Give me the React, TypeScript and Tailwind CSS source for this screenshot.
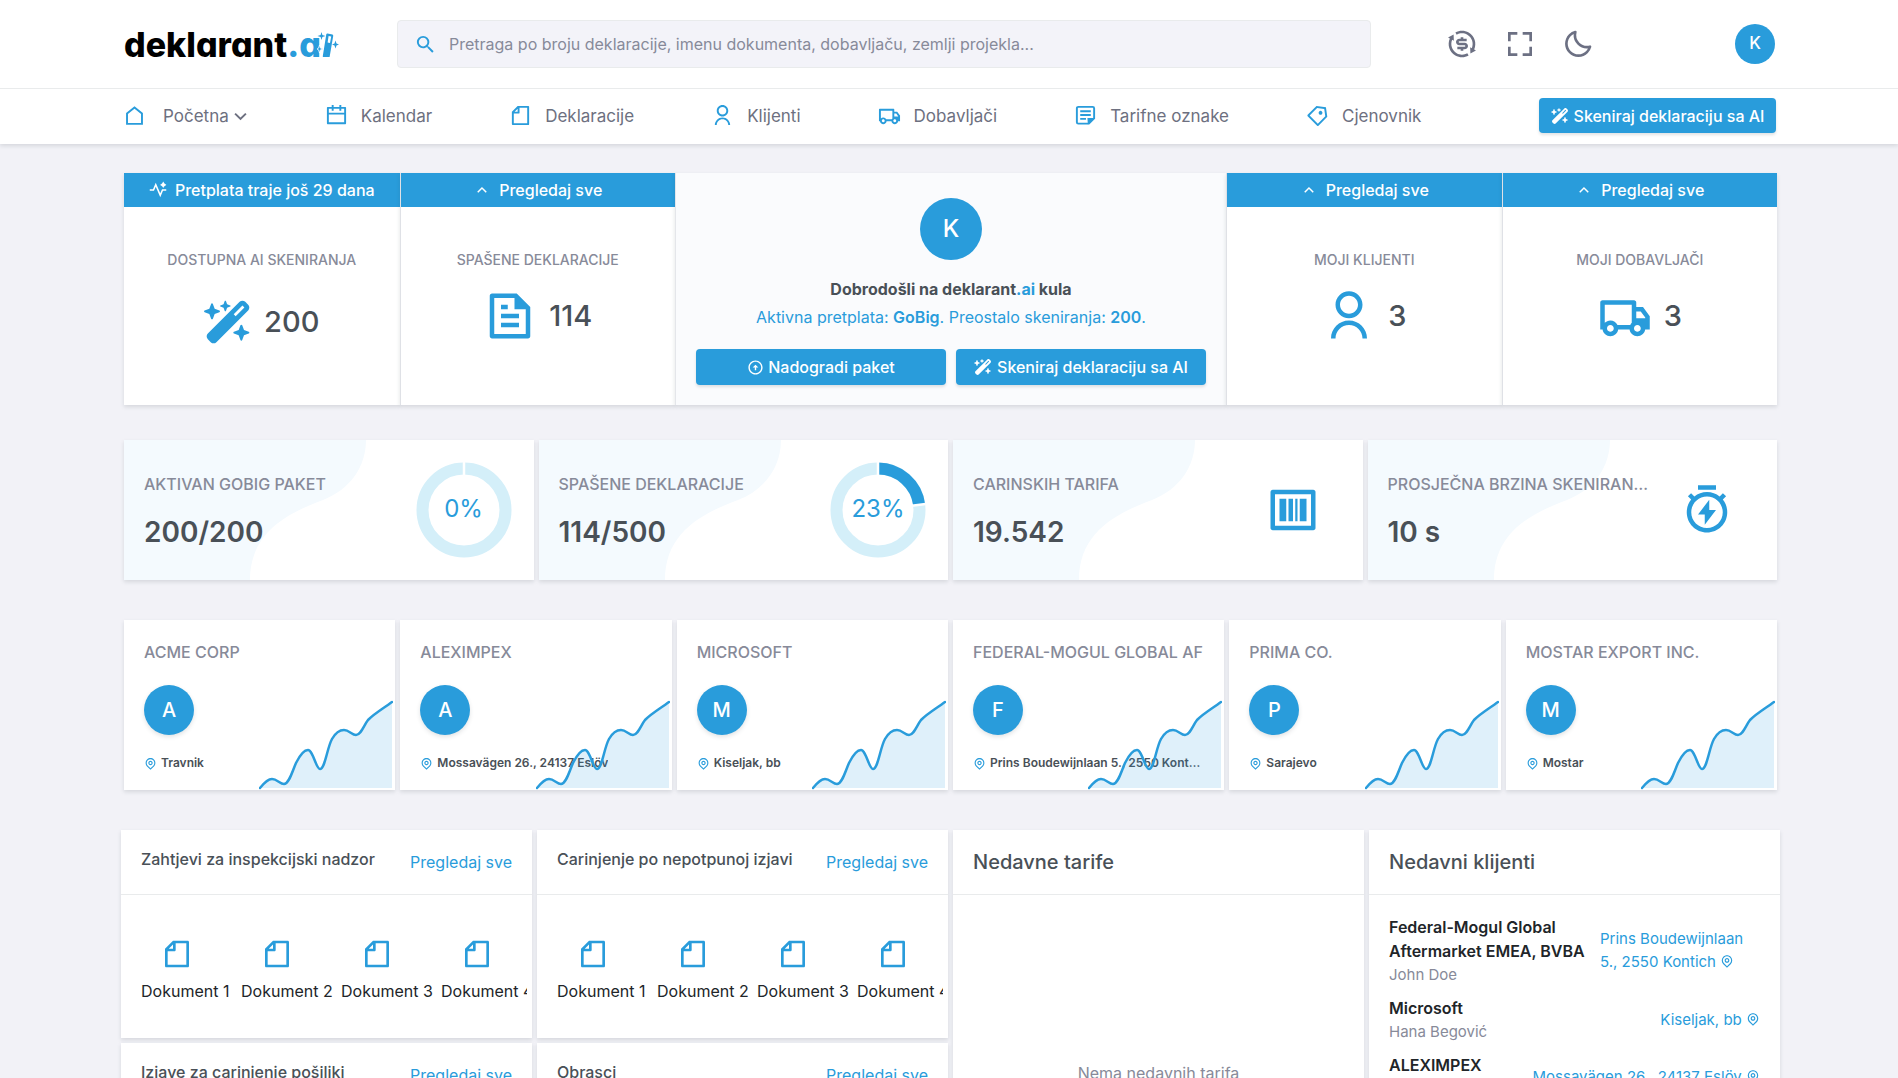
import type { ReactNode } from "react";
import { BiFullscreen, BiMoon } from "react-icons/bi";
import { FaWandMagicSparkles } from "react-icons/fa6";
import { MdSearch } from "react-icons/md";
import {
  RiArrowDownSLine,
  RiArrowUpCircleLine,
  RiArrowUpSLine,
  RiBarcodeBoxLine,
  RiCalendarLine,
  RiExchangeDollarLine,
  RiFileLine,
  RiFileTextLine,
  RiMapPinLine,
  RiPriceTag3Line,
  RiPulseAiLine,
  RiTimerFlashLine,
  RiTruckLine,
  RiUserLine,
} from "react-icons/ri";

const cardShadow = "shadow-[0_2px_4px_rgba(56,65,74,0.15)]";

function HomeIcon() {
  return (
    <svg width="23" height="23" viewBox="0 0 24 24" fill="none" stroke="currentColor" strokeWidth="2" aria-hidden="true">
      <path d="M12 2.5 4.2 8.8V19.7H19.8V8.8Z" />
    </svg>
  );
}

function NoteIcon() {
  return (
    <svg width="23" height="23" viewBox="0 0 24 24" fill="none" stroke="currentColor" strokeWidth="2" aria-hidden="true">
      <path d="M4.5 3H19.5A1.5 1.5 0 0 1 21 4.5V15L15.5 20.5H4.5A1.5 1.5 0 0 1 3 19V4.5A1.5 1.5 0 0 1 4.5 3Z" />
      <path d="M6.5 7.5H17.5M6.5 11.5H17.5M6.5 15.5H12.5" />
      <path d="M14 14.5H21.5L14.5 21.5Z" fill="currentColor" stroke="none" />
    </svg>
  );
}

function Logo() {
  return (
    <a href="#" aria-label="deklarant.ai" className="flex items-center pt-0.5">
      <span className="text-[34px] leading-[44px] font-extrabold text-black [font-feature-settings:'cv11']">
        deklarant<span className="text-[#299cdb]">.a</span>
      </span>
      <svg width="22" height="30" viewBox="0 0 22 30" className="-ml-1 text-[#299cdb]" fill="currentColor" aria-hidden="true">
        <path
          fillRule="evenodd"
          d="M10.5 3.5 15.5 4.5Q16.5 5 16.2 6L12.6 27H6.2Q5.600 27 5.800 26L9.3 4.300Q9.600 3.300 10.500 3.500ZM11.600 6 10.600 12.500 13 13 14.200 6.500Z"
        />
        <path d="M4.5 2 5.4 5.100 8.500 6 5.400 6.900 4.500 10 3.600 6.900 .5 6 3.600 5.100Z" />
        <path d="M18.500 10.500 19.500 13.500 22 14.500 19.500 15.500 18.500 18.500 17.500 15.500 15 14.500 17.500 13.500Z" />
        <path d="M2.500 15 3.400 18.100 6.500 19 3.400 19.900 2.500 23 1.600 19.900 0 19 1.600 18.100Z" stroke="#fff" strokeWidth="0.8" />
      </svg>
    </a>
  );
}

function ScanButton({ className }: { className: string }) {
  return (
    <button
      type="button"
      className={`flex items-center justify-center gap-[5px] rounded bg-[#299cdb] text-base font-medium text-white shadow-[0_2px_3px_rgba(56,65,74,0.15)] ${className}`}
    >
      <FaWandMagicSparkles size={18} />
      Skeniraj deklaraciju sa AI
    </button>
  );
}

function NavItem({ icon, label }: { icon: ReactNode; label: string }) {
  return (
    <a href="#" className="flex items-center gap-[13px] text-[#6d7080]">
      <span className="mb-0.5 text-[#299cdb]">{icon}</span>
      {label}
    </a>
  );
}

function Header() {
  return (
    <header className={`bg-white ${cardShadow}`}>
      <div className="flex h-[88px] items-center pr-[123px] pl-[124px]">
        <div className="w-[273px]">
          <Logo />
        </div>
        <label className="flex h-12 w-[974px] items-center rounded border border-[#e9ebec] bg-[#f3f3f9] pl-4">
          <MdSearch size={23} className="text-[#299cdb]" />
          <input
            type="search"
            aria-label="Pretraga"
            placeholder="Pretraga po broju deklaracije, imenu dokumenta, dobavljaču, zemlji projekla..."
            className="ml-3 flex-1 bg-transparent text-base outline-none placeholder:text-[#878a99]"
          />
        </label>
        <div className="ml-[75px] flex items-center gap-[26px] text-[#6c7083]">
          <button type="button" aria-label="Valuta">
            <RiExchangeDollarLine size={32} />
          </button>
          <button type="button" aria-label="Cijeli ekran">
            <BiFullscreen size={32} />
          </button>
          <button type="button" aria-label="Tamni prikaz">
            <BiMoon size={32} />
          </button>
        </div>
        <button type="button" className="ml-auto size-10 rounded-full bg-[#299cdb] text-[17px] font-medium text-white">
          K
        </button>
      </div>
      <nav className="flex h-14 items-center gap-[77px] border-t border-[#e9ebec] pr-[122px] pl-[123px] text-[17px]">
        <a href="#" className="flex items-center text-[#6d7080]">
          <span className="mr-[17px] text-[#299cdb]">
            <HomeIcon />
          </span>
          Početna
          <RiArrowDownSLine size={23} className="-mr-1" />
        </a>
        <NavItem icon={<RiCalendarLine size={23} />} label="Kalendar" />
        <NavItem icon={<RiFileLine size={23} />} label="Deklaracije" />
        <NavItem icon={<RiUserLine size={23} />} label="Klijenti" />
        <NavItem icon={<RiTruckLine size={23} />} label="Dobavljači" />
        <NavItem icon={<NoteIcon />} label="Tarifne oznake" />
        <NavItem icon={<RiPriceTag3Line size={23} />} label="Cjenovnik" />
        <ScanButton className="mb-0.5 ml-auto h-[35px] w-[237px]" />
      </nav>
    </header>
  );
}

type SummaryProps = {
  headIcon: ReactNode;
  head: string;
  title: string;
  icon: ReactNode;
  value: string;
  rowClass?: string;
};

function Summary({ headIcon, head, title, icon, value, rowClass = "mt-[18px]" }: SummaryProps) {
  return (
    <section className={`border-l border-[#dfe1e6] bg-white first:border-l-0 ${cardShadow}`}>
      <a href="#" className="flex h-[34px] items-center justify-center gap-2 bg-[#299cdb] text-base font-medium text-white">
        {headIcon}
        {head}
      </a>
      <h5 className="mt-[43px] text-center text-sm font-medium text-[#878a99]">{title}</h5>
      <div className={`flex h-14 items-center justify-center gap-3 ${rowClass}`}>
        <span className="text-[#299cdb]">{icon}</span>
        <span className="text-[29px] font-medium text-[#495057]">{value}</span>
      </div>
    </section>
  );
}

function Welcome() {
  return (
    <section className={`col-span-2 flex flex-col items-center border-l border-[#e4e6ea] bg-[#fafbfd] px-5 pt-[25px] ${cardShadow}`}>
      <span className="flex size-[62px] items-center justify-center rounded-full bg-[#299cdb] text-2xl font-medium text-white">K</span>
      <h4 className="mt-4 text-base leading-[26px] font-bold text-[#495057]">
        Dobrodošli na deklarant<span className="text-[#299cdb]">.ai</span> kula
      </h4>
      <p className="text-base leading-[30px] text-[#299cdb]">
        Aktivna pretplata: <b className="font-semibold">GoBig</b>. Preostalo skeniranja: <b className="font-semibold">200</b>.
      </p>
      <div className="mt-[17px] grid w-full grid-cols-2 gap-[10px]">
        <button
          type="button"
          className="flex h-9 items-center justify-center gap-1 rounded bg-[#299cdb] text-base font-medium text-white shadow-[0_2px_3px_rgba(56,65,74,0.15)]"
        >
          <RiArrowUpCircleLine size={17} />
          Nadogradi paket
        </button>
        <ScanButton className="h-9" />
      </div>
    </section>
  );
}

function Donut({ percent }: { percent: number }) {
  const len = 2 * Math.PI * 41.5;
  const angle = (percent / 100) * 2 * Math.PI;
  return (
    <div className="relative">
      <svg width="96" height="96" viewBox="0 0 96 96" fill="none" aria-hidden="true">
        <circle cx="48" cy="48" r="41.5" stroke="#d4eff9" strokeWidth="12" />
        {percent > 0 && (
          <circle
            cx="48"
            cy="48"
            r="41.5"
            stroke="#299cdb"
            strokeWidth="12"
            strokeDasharray={`${(len * percent) / 100} ${len}`}
            transform="rotate(-90 48 48)"
          />
        )}
        <path d="M48 0V14" stroke="#fff" strokeWidth="2.5" />
        {percent > 0 && (
          <path
            d={`M${48 + 34 * Math.sin(angle)} ${48 - 34 * Math.cos(angle)}L${48 + 48 * Math.sin(angle)} ${48 - 48 * Math.cos(angle)}`}
            stroke="#fff"
            strokeWidth="2.5"
          />
        )}
      </svg>
      <span className="absolute inset-0 flex items-center justify-center pb-0.5 text-2xl text-[#299cdb]">{percent}%</span>
    </div>
  );
}

function Stat({ title, value, children }: { title: string; value: string; children: ReactNode }) {
  return (
    <section className={`relative flex h-[140px] bg-white ${cardShadow}`}>
      <svg width="242" height="140" viewBox="0 0 242 140" className="absolute top-0 left-0" aria-hidden="true">
        <path d="M0 0H242C242 26 227 49 199 60C164 73 126 92 126 140H0Z" fill="#f4fafe" />
      </svg>
      <div className="relative min-w-0 flex-1 pt-8 pr-1.5 pl-5">
        <p className="truncate text-base font-medium text-[#878a99]">{title}</p>
        <p className="mt-[17px] text-[28px] leading-[38px] font-semibold text-[#495057]">{value}</p>
      </div>
      <div className="mr-5 flex w-[100px] items-center justify-center text-[#299cdb]">{children}</div>
    </section>
  );
}

const LINE =
  "M1 88C5 83 9 79 13 79C18 79 21 84 25 84C30 84 33 72 37 63C41 55 45 50 49 50C54 50 57 69 61 69C66 69 68 48 73 39C77 32 81 30 85 30C90 30 93 35 97 35C102 35 105 25 109 20C116 13 125 8 133 2";

function Company({ name, place }: { name: string; place: string }) {
  return (
    <section className={`relative h-[170px] min-w-0 bg-white px-5 pt-5 ${cardShadow}`}>
      <h5 className="overflow-hidden text-base font-medium whitespace-nowrap text-[#878a99]">{name}</h5>
      <span className="mt-[21px] flex size-[50px] items-center justify-center rounded-full bg-[#299cdb] text-xl font-medium text-white shadow-[0_2px_4px_rgba(56,65,74,0.15)]">
        {name[0]}
      </span>
      <p className="mt-5 flex items-center gap-1 pr-1 text-xs font-semibold text-[#495057]">
        <RiMapPinLine size={13} className="shrink-0 text-[#299cdb]" stroke="currentColor" />
        <span className="truncate">{place}</span>
      </p>
      <svg width="134" height="90" viewBox="0 0 134 90" className="absolute right-[2px] bottom-0" fill="none" aria-hidden="true">
        <path d={`${LINE}V88Z`} fill="#299cdb" fillOpacity="0.15" />
        <path d={LINE} stroke="#299cdb" strokeWidth="2.5" strokeLinecap="round" />
      </svg>
    </section>
  );
}

function Documents({ title }: { title: string }) {
  return (
    <section className={`h-[208px] bg-white ${cardShadow}`}>
      <div className="flex h-[65px] items-center justify-between border-b border-[#e9ebec] px-5">
        <h4 className="pb-1.5 text-base font-medium text-[#495057]">{title}</h4>
        <a href="#" className="text-base text-[#299cdb]">
          Pregledaj sve
        </a>
      </div>
      <ul className="mr-[5px] ml-5 flex overflow-hidden pt-[43px]">
        {[1, 2, 3, 4].map((n) => (
          <li key={n} className="w-[100px] shrink-0 text-base whitespace-nowrap text-[#212529]">
            <RiFileLine size={32} className="ml-5 text-[#299cdb]" />
            <a href="#" className="mt-[9px] block">
              Dokument {n}
            </a>
          </li>
        ))}
      </ul>
    </section>
  );
}

function Panel({ title, children }: { title: string; children: ReactNode }) {
  return (
    <section className={`bg-white ${cardShadow}`}>
      <h4 className="flex h-[65px] items-center border-b border-[#e9ebec] px-5 text-xl font-medium text-[#495057]">{title}</h4>
      {children}
    </section>
  );
}

const clients = [
  { name: "Federal-Mogul Global Aftermarket EMEA, BVBA", person: "John Doe", place: "Prins Boudewijnlaan 5., 2550 Kontich", wrap: true },
  { name: "Microsoft", person: "Hana Begović", place: "Kiseljak, bb", wrap: false },
  { name: "ALEXIMPEX", person: "", place: "Mossavägen 26., 24137 Eslöv", wrap: false },
];

export default function App() {
  return (
    <div className="min-h-screen bg-[#f2f2f7] pb-10 font-['Inter',sans-serif]">
      <Header />
      <main className="pr-[118px] pl-[121px]">
        <div className="mx-[3px] mt-[29px] grid h-[232px] grid-cols-6">
          <Summary
            headIcon={<RiPulseAiLine size={18} />}
            head="Pretplata traje još 29 dana"
            title="DOSTUPNA AI SKENIRANJA"
            icon={<FaWandMagicSparkles size={48} />}
            value="200"
            rowClass="mt-6"
          />
          <Summary headIcon={<RiArrowUpSLine size={18} />} head="Pregledaj sve" title="SPAŠENE DEKLARACIJE" icon={<RiFileTextLine size={54} />} value="114" />
          <Welcome />
          <Summary headIcon={<RiArrowUpSLine size={18} />} head="Pregledaj sve" title="MOJI KLIJENTI" icon={<RiUserLine size={54} />} value="3" />
          <Summary headIcon={<RiArrowUpSLine size={18} />} head="Pregledaj sve" title="MOJI DOBAVLJAČI" icon={<RiTruckLine size={54} />} value="3" />
        </div>

        <div className="mx-[3px] mt-[35px] grid grid-cols-4 gap-[5px]">
          <Stat title="AKTIVAN GOBIG PAKET" value="200/200">
            <Donut percent={0} />
          </Stat>
          <Stat title="SPAŠENE DEKLARACIJE" value="114/500">
            <Donut percent={23} />
          </Stat>
          <Stat title="CARINSKIH TARIFA" value="19.542">
            <RiBarcodeBoxLine size={54} />
          </Stat>
          <Stat title="PROSJEČNA BRZINA SKENIRANJA" value="10 s">
            <RiTimerFlashLine size={54} />
          </Stat>
        </div>

        <div className="mx-[3px] mt-10 grid grid-cols-6 gap-[5px]">
          <Company name="ACME CORP" place="Travnik" />
          <Company name="ALEXIMPEX" place="Mossavägen 26., 24137 Eslöv" />
          <Company name="MICROSOFT" place="Kiseljak, bb" />
          <Company name="FEDERAL-MOGUL GLOBAL AF" place="Prins Boudewijnlaan 5., 2550 Kontich" />
          <Company name="PRIMA CO." place="Sarajevo" />
          <Company name="MOSTAR EXPORT INC." place="Mostar" />
        </div>

        <div className="mt-10 grid grid-cols-4 gap-[5px]">
          <div className="flex flex-col gap-[5px]">
            <Documents title="Zahtjevi za inspekcijski nadzor" />
            <Documents title="Izjave za carinjenje pošiljki" />
          </div>
          <div className="flex flex-col gap-[5px]">
            <Documents title="Carinjenje po nepotpunoj izjavi" />
            <Documents title="Obrasci" />
          </div>
          <Panel title="Nedavne tarife">
            <p className="pt-[166px] text-center text-base text-[#878a99]">Nema nedavnih tarifa</p>
          </Panel>
          <Panel title="Nedavni klijenti">
            <ul className="flex flex-col gap-[9px] p-5">
              {clients.map((c) => (
                <li key={c.name} className="flex items-center justify-between">
                  <div className={c.wrap ? "w-[211px]" : ""}>
                    <h6 className="text-base font-semibold text-[#212529]">{c.name}</h6>
                    <p className="h-6 text-[15px] leading-6 text-[#878a99]">{c.person}</p>
                  </div>
                  <a href="#" className={`pb-0.5 text-[15px] leading-[23px] text-[#299cdb] ${c.wrap ? "w-40" : ""}`}>
                    {c.place} <RiMapPinLine size={14} className="mb-[3px] inline" />
                  </a>
                </li>
              ))}
            </ul>
          </Panel>
        </div>
      </main>
    </div>
  );
}
